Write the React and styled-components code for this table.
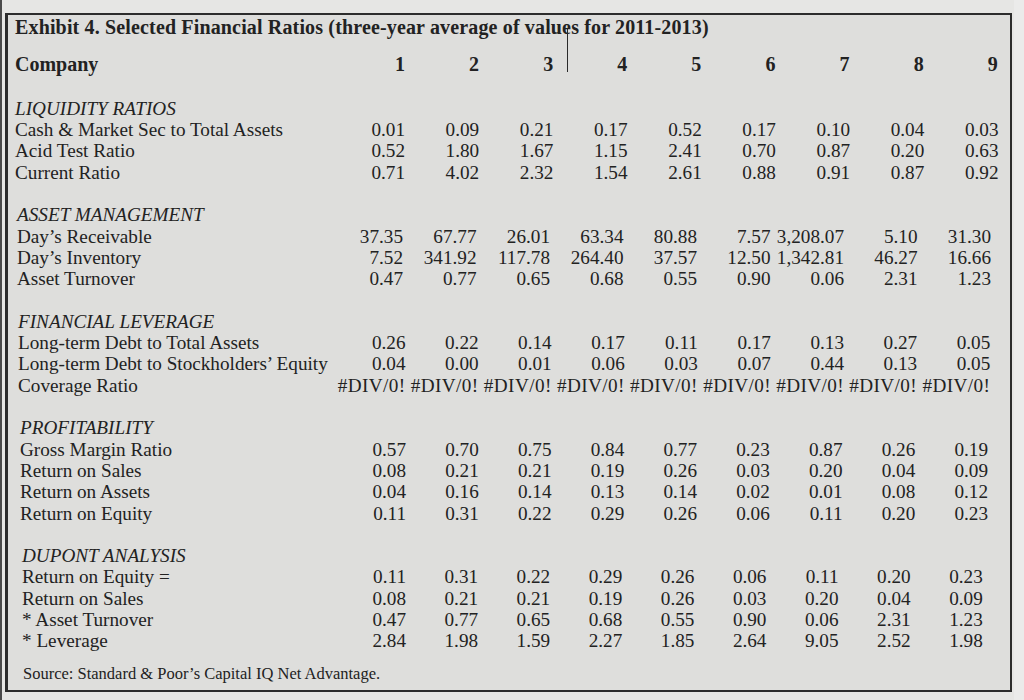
import React from "react";
import styled, { createGlobalStyle } from "styled-components";

const GlobalStyle = createGlobalStyle`
  html, body { margin: 0; padding: 0; }
  body {
    background: #e4e4e2;
    font-family: "Liberation Serif", "Times New Roman", serif;
    color: #222222;
  }
`;

const Page = styled.div`
  width: 1024px;
  height: 700px;
  box-sizing: border-box;
  padding: 13px 12px 0 5px;
  background: linear-gradient(90deg, #4a4a4a 0 2px, #e6e6e4 2px 1014px, #ebebea 1014px);
`;

const Frame = styled.div`
  position: relative;
  box-sizing: border-box;
  height: 679px;
  border: 2px solid #2c2c2c;
  border-left-width: 3px;
  background: #dededc;
  padding: 0 0 0 7px;
`;

const Title = styled.h1`
  margin: 0;
  font-size: 20px;
  line-height: 24px;
  font-weight: 700;
  letter-spacing: 0.15px;
  white-space: nowrap;
`;

const Section = styled.section`
  display: grid;
  grid-template-columns: ${(p) => p.$first - 15 - p.$shift - p.$colW}px repeat(9, ${(p) => p.$colW}px);
  padding-left: ${(p) => p.$shift}px;
  margin-top: ${(p) => p.$gap}px;
  font-size: 19.2px;
  line-height: 21.3px;
  white-space: nowrap;
`;

const HeadRow = styled(Section)`
  font-size: 20px;
  line-height: 24px;
  font-weight: 700;
`;

const SectionTitle = styled.div`
  grid-column: 1 / -1;
  font-style: italic;
`;

const Label = styled.div`
  white-space: nowrap;
`;

const Num = styled.div`
  text-align: right;
  white-space: nowrap;
  letter-spacing: ${(p) => (p.$wide ? "0.4px" : "0")};
`;

const Source = styled.p`
  margin: 12px 0 0 8px;
  font-size: 16.5px;
  line-height: 20px;
`;

const Cursor = styled.div`
  position: absolute;
  left: 559px;
  top: 14px;
  width: 1px;
  height: 43px;
  background: #2a2a2a;
`;

const sections = [
  {
    title: "LIQUIDITY RATIOS",
    shift: 0, colW: 74.2, first: 405, gap: 21.6,
    rows: [
      ["Cash & Market Sec to Total Assets", ["0.01", "0.09", "0.21", "0.17", "0.52", "0.17", "0.10", "0.04", "0.03"]],
      ["Acid Test Ratio", ["0.52", "1.80", "1.67", "1.15", "2.41", "0.70", "0.87", "0.20", "0.63"]],
      ["Current Ratio", ["0.71", "4.02", "2.32", "1.54", "2.61", "0.88", "0.91", "0.87", "0.92"]],
    ],
  },
  {
    title: "ASSET MANAGEMENT",
    shift: 2, colW: 73.5, first: 403, gap: 21.3,
    rows: [
      ["Day\u2019s Receivable", ["37.35", "67.77", "26.01", "63.34", "80.88", "7.57", "3,208.07", "5.10", "31.30"]],
      ["Day\u2019s Inventory", ["7.52", "341.92", "117.78", "264.40", "37.57", "12.50", "1,342.81", "46.27", "16.66"]],
      ["Asset Turnover", ["0.47", "0.77", "0.65", "0.68", "0.55", "0.90", "0.06", "2.31", "1.23"]],
    ],
  },
  {
    title: "FINANCIAL LEVERAGE",
    shift: 3, colW: 73.1, first: 405.5, gap: 21.3,
    rows: [
      ["Long-term Debt to Total Assets", ["0.26", "0.22", "0.14", "0.17", "0.11", "0.17", "0.13", "0.27", "0.05"]],
      ["Long-term Debt to Stockholders\u2019 Equity", ["0.04", "0.00", "0.01", "0.06", "0.03", "0.07", "0.44", "0.13", "0.05"]],
      ["Coverage Ratio", Array(9).fill("#DIV/0!"), true],
    ],
  },
  {
    title: "PROFITABILITY",
    shift: 5, colW: 72.75, first: 406, gap: 21.3,
    rows: [
      ["Gross Margin Ratio", ["0.57", "0.70", "0.75", "0.84", "0.77", "0.23", "0.87", "0.26", "0.19"]],
      ["Return on Sales", ["0.08", "0.21", "0.21", "0.19", "0.26", "0.03", "0.20", "0.04", "0.09"]],
      ["Return on Assets", ["0.04", "0.16", "0.14", "0.13", "0.14", "0.02", "0.01", "0.08", "0.12"]],
      ["Return on Equity", ["0.11", "0.31", "0.22", "0.29", "0.26", "0.06", "0.11", "0.20", "0.23"]],
    ],
  },
  {
    title: "DUPONT ANALYSIS",
    shift: 7, colW: 72.1, first: 406, gap: 21.3,
    rows: [
      ["Return on Equity =", ["0.11", "0.31", "0.22", "0.29", "0.26", "0.06", "0.11", "0.20", "0.23"]],
      ["Return on Sales", ["0.08", "0.21", "0.21", "0.19", "0.26", "0.03", "0.20", "0.04", "0.09"]],
      ["* Asset Turnover", ["0.47", "0.77", "0.65", "0.68", "0.55", "0.90", "0.06", "2.31", "1.23"]],
      ["* Leverage", ["2.84", "1.98", "1.59", "2.27", "1.85", "2.64", "9.05", "2.52", "1.98"]],
    ],
  },
];

export default function App() {
  return (
    <>
      <GlobalStyle />
      <Page>
        <Frame>
          <Title>Exhibit 4. Selected Financial Ratios (three-year average of values for 2011-2013)</Title>
          <HeadRow $shift={0} $colW={74.1} $first={405} $gap={13.3}>
            <Label>Company</Label>
            {[1, 2, 3, 4, 5, 6, 7, 8, 9].map((n) => (
              <Num key={n}>{n}</Num>
            ))}
          </HeadRow>
          {sections.map((s) => (
            <Section key={s.title} $shift={s.shift} $colW={s.colW} $first={s.first} $gap={s.gap}>
              <SectionTitle>{s.title}</SectionTitle>
              {s.rows.map(([label, vals, wide]) => (
                <React.Fragment key={label}>
                  <Label>{label}</Label>
                  {vals.map((v, i) => (
                    <Num key={i} $wide={wide}>{v}</Num>
                  ))}
                </React.Fragment>
              ))}
            </Section>
          ))}
          <Source>Source: Standard &amp; Poor’s Capital IQ Net Advantage.</Source>
          <Cursor />
        </Frame>
      </Page>
    </>
  );
}
